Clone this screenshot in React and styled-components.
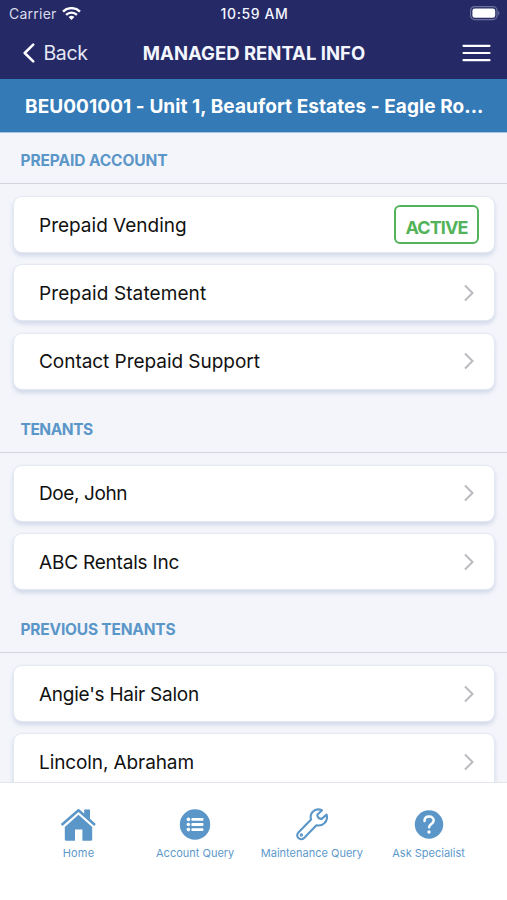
import React from "react"
import styled, { createGlobalStyle } from "styled-components"

const GlobalStyle = createGlobalStyle`
    * {
        box-sizing: border-box;
    }

    body {
        margin: 0;
        font-family: Inter, "Liberation Sans", sans-serif;
        background: #f3f5fa;
    }
`
const Screen = styled.div`
    display: flex;
    flex-direction: column;
    width: 507px;
    height: 900px;
    overflow: hidden;
    background: #f3f5fa;
`
const Header = styled.header`
    flex: none;
    height: 79px;
    color: #f4f6ff;
    background: #252a67;
`
const StatusBar = styled.div`
    display: grid;
    grid-template-columns: 1fr auto 1fr;
    align-items: center;
    height: 27px;
    padding: 0 7px 0 9px;
    font-size: 14px;
`
const Carrier = styled.div`
    display: flex;
    align-items: center;
    gap: 5px;
    letter-spacing: .25px;
    color: #d9dbea;
`
const Time = styled.div`
    font-weight: 500;
    letter-spacing: .6px;
`
const Battery = styled.svg`
    justify-self: end;
`
const NavBar = styled.div`
    display: grid;
    grid-template-columns: 1fr auto 1fr;
    align-items: center;
    height: 52px;
    padding: 0 16px 0 23px;
`
const Back = styled.button`
    display: flex;
    align-items: center;
    gap: 8.5px;
    padding: 0;
    border: 0;
    font: inherit;
    font-size: 19.5px;
    letter-spacing: -.4px;
    color: #e6e8f5;
    background: none;
`
const Title = styled.h1`
    margin: 0 6px 0 0;
    font-size: 18.5px;
    font-weight: 700;
    letter-spacing: 0;
`
const Menu = styled.button`
    display: flex;
    justify-self: end;
    padding: 0;
    border: 0;
    background: none;
`
const Property = styled.div`
    flex: none;
    height: 54px;
    padding: 0 22px 0 25px;
    line-height: 55px;
    font-size: 19px;
    font-weight: 700;
    letter-spacing: .07px;
    white-space: nowrap;
    color: #fff;
    background: #337ab7;
    border-bottom: 1px solid #a9c5df;
`
const Content = styled.main`
    flex: 1;
    min-height: 0;
    overflow: hidden;
`
const SectionTitle = styled.h2`
    height: 51px;
    margin: 0;
    padding-left: 20.5px;
    line-height: 55px;
    font-size: 15.5px;
    font-weight: 700;
    letter-spacing: ${ props => props.$spacing };
    color: #5b96c9;
    border-bottom: 1px solid #d3d6dc;
`
const List = styled.div`
    display: flex;
    flex-direction: column;
    gap: 13.3px;
    padding: 13.2px 13px 12.8px 14px;
`
const Row = styled.div`
    display: flex;
    align-items: center;
    justify-content: space-between;
    height: 55px;
    padding: 0 15px 0 25px;
    border-radius: 8px;
    background: #fff;
    box-shadow: 0 0 1px 1px #e4e8f1, 0 3px 4px 1px #d2d8ea;
`
const Label = styled.span`
    padding-top: 1px;
    font-size: 19px;
    letter-spacing: ${ props => props.$spacing };
    color: #111;
`
const Chevron = styled.svg`
    margin-right: 5px;
`
const Badge = styled.span`
    width: 85px;
    height: 39px;
    margin-bottom: 1px;
    padding-top: 3px;
    border: 2px solid #53b35a;
    border-radius: 6px;
    line-height: 36px;
    text-align: center;
    font-size: 18px;
    font-weight: 700;
    letter-spacing: -.9px;
    color: #53b35a;
`
const TabBar = styled.nav`
    flex: none;
    display: grid;
    grid-template-columns: repeat(4, 116.7px);
    justify-content: center;
    height: 118px;
    padding-top: 23px;
    border-top: 1px solid #e2e6ec;
    background: #fff;
`
const Tab = styled.div`
    display: flex;
    flex-direction: column;
    align-items: center;
    gap: 4px;
    font-size: 11px;
    line-height: 15px;
    white-space: nowrap;
    letter-spacing: ${ props => props.$spacing || "0" };
    color: #5e99cb;
`

const WifiIcon = () => (
    <svg width="19" height="14" viewBox="0 0 19 14" fill="none" stroke="#fff" strokeWidth="2.4">
        <path d="M1 4.6a12.2 12.2 0 0 1 17 0" />
        <path d="M4.1 7.8a7.8 7.8 0 0 1 10.8 0" />
        <path d="M9.5 13.1 6.6 10.1a4.2 4.2 0 0 1 5.8 0z" fill="#fff" stroke="none" />
    </svg>
)

const HomeIcon = () => (
    <svg width="36" height="36" viewBox="0 0 36 36" fill="#5b96c9">
        <path d="M18.5 8.8 32.2 21v12.2a1.6 1.6 0 0 1-1.6 1.6h-8.2V23.4h-7.4v11.4H6.4a1.6 1.6 0 0 1-1.6-1.6V21z" />
        <path d="M1.7 19.4 18.5 4.6 35.3 19.4" fill="none" stroke="#fff" strokeWidth="4.8" />
        <path d="M24.2 3.5h5.8v11.2l-5.8-5.2z" />
        <path d="M1.6 19 18.5 4.2 35 19" fill="none" stroke="#5b96c9" strokeWidth="2.5" strokeLinejoin="round" />
    </svg>
)

const AccountIcon = () => (
    <svg width="36" height="36" viewBox="0 0 36 36">
        <circle cx="18" cy="18.5" r="15.2" fill="#5b96c9" />
        <g fill="#fff">
            <circle cx="11.4" cy="13.4" r="1.8" />
            <circle cx="11.4" cy="18.5" r="1.8" />
            <circle cx="11.4" cy="23.6" r="1.8" />
            <rect x="14.4" y="12" width="12" height="2.8" rx=".7" />
            <rect x="14.4" y="17.1" width="12" height="2.8" rx=".7" />
            <rect x="14.4" y="22.2" width="12" height="2.8" rx=".7" />
        </g>
    </svg>
)

const WrenchIcon = () => (
    <svg width="36" height="36" viewBox="0 0 36 36" fill="none" stroke="#5b96c9" strokeWidth="2.1" strokeLinejoin="round" strokeLinecap="round">
        <path d="M28 4.2c-3.3-1.4-7.2-.8-9.5 1.8-1.9 2.2-2.3 4.9-1.4 7.6L4.4 26.4c-1.6 1.6-1.6 4.1 0 5.7s4.1 1.5 5.7-.1l12.3-12.8c3 .7 6 0 8.2-2.2 2.2-2.3 2.9-5.4 2-8.5l-4.9 4.4c-2.4.2-4.4-1.6-4.4-4.1z" />
        <circle cx="7.4" cy="29.1" r=".7" />
    </svg>
)

const HelpIcon = () => (
    <svg width="36" height="36" viewBox="0 0 36 36">
        <circle cx="18" cy="18.5" r="14.2" fill="#5b96c9" />
        <path d="M13.5 15c0-2.8 1.9-4.4 4.6-4.4 2.6 0 4.6 1.6 4.6 4 0 3.5-4.6 3.4-4.6 6.7" fill="none" stroke="#fff" strokeWidth="2.5" strokeLinecap="round" />
        <circle cx="18" cy="26" r="1.7" fill="#fff" />
    </svg>
)

const sections = [
    {
        title: "PREPAID ACCOUNT",
        spacing: "-.1px",
        rows: [
            { label: "Prepaid Vending", spacing: "0", badge: "ACTIVE" },
            { label: "Prepaid Statement", spacing: ".1px" },
            { label: "Contact Prepaid Support", spacing: "-.04px" }
        ]
    },
    {
        title: "TENANTS",
        spacing: "-.45px",
        rows: [
            { label: "Doe, John", spacing: "-.4px" },
            { label: "ABC Rentals Inc", spacing: "-.2px" }
        ]
    },
    {
        title: "PREVIOUS TENANTS",
        spacing: "-.2px",
        rows: [
            { label: "Angie's Hair Salon", spacing: "-.25px" },
            { label: "Lincoln, Abraham", spacing: "-.1px" }
        ]
    }
]

const tabs = [
    { label: "Home", Icon: HomeIcon, spacing: ".2px" },
    { label: "Account Query", Icon: AccountIcon },
    { label: "Maintenance Query", Icon: WrenchIcon },
    { label: "Ask Specialist", Icon: HelpIcon }
]

export default class App extends React.PureComponent {
    render() {
        return (
            <Screen>
                <GlobalStyle />
                <Header>
                    <StatusBar>
                        <Carrier>Carrier <WifiIcon /></Carrier>
                        <Time>10:59 AM</Time>
                        <Battery width="30" height="15" viewBox="0 0 30 15">
                            <rect x=".6" y=".6" width="26.4" height="13" rx="4" fill="none" stroke="#6d709a" strokeWidth="1.2" />
                            <rect x="2.4" y="2.4" width="22.8" height="9.4" rx="2.3" fill="#fff" />
                            <path d="M28.2 5v4.4c1.6-.6 1.6-3.8 0-4.4" fill="#6d709a" />
                        </Battery>
                    </StatusBar>
                    <NavBar>
                        <Back>
                            <svg width="12" height="20" viewBox="0 0 12 20" fill="none" stroke="#fff" strokeWidth="2.5" strokeLinecap="round" strokeLinejoin="round">
                                <path d="M10.2 1.6 1.7 10l8.5 8.4" />
                            </svg>
                            Back
                        </Back>
                        <Title>MANAGED RENTAL INFO</Title>
                        <Menu aria-label="Menu">
                            <svg width="29" height="18" viewBox="0 0 29 18" stroke="#fff" strokeWidth="2.2" strokeLinecap="round">
                                <path d="M1.5 1.8h26M1.5 9h26M1.5 16.2h26" />
                            </svg>
                        </Menu>
                    </NavBar>
                </Header>
                <Property>BEU001001 - Unit 1, Beaufort Estates - Eagle Ro...</Property>
                <Content>
                    { sections.map(section => (
                        <section key={ section.title }>
                            <SectionTitle $spacing={ section.spacing }>{ section.title }</SectionTitle>
                            <List>
                                { section.rows.map(row => (
                                    <Row key={ row.label }>
                                        <Label $spacing={ row.spacing }>{ row.label }</Label>
                                        { row.badge
                                            ? <Badge>{ row.badge }</Badge>
                                            : (
                                                <Chevron width="10" height="18" viewBox="0 0 10 18" fill="none" stroke="#b9babd" strokeWidth="2">
                                                    <path d="M1 1.5 8.5 9 1 16.5" />
                                                </Chevron>
                                            ) }
                                    </Row>
                                )) }
                            </List>
                        </section>
                    )) }
                </Content>
                <TabBar>
                    { tabs.map(({ label, Icon, spacing }) => (
                        <Tab key={ label } $spacing={ spacing }>
                            <Icon />
                            { label }
                        </Tab>
                    )) }
                </TabBar>
            </Screen>
        )
    }
}
